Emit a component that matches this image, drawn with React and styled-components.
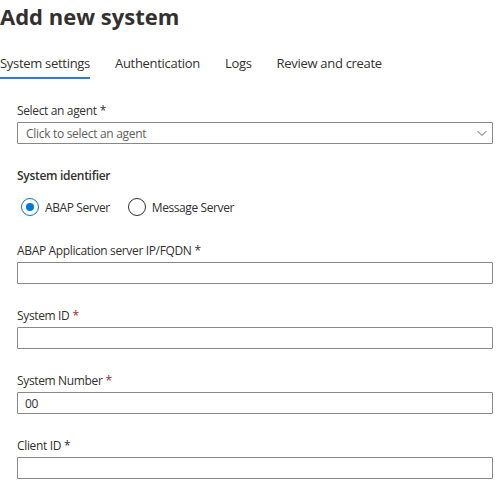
import React, { useState } from "react";
import styled, { createGlobalStyle } from "styled-components";

const GlobalStyle = createGlobalStyle`
    body {
        margin: 0;
        background: #ffffff;
        font-family: "Open Sans", "Noto Sans", sans-serif;
        color: #323130;
    }
`;

const Page = styled.div`
    width: 499px;
`;

const Title = styled.h1`
    margin: 0;
    font-size: 22px;
    line-height: 32px;
    font-weight: 700;
    color: #323130;
`;

const TabBar = styled.div`
    display: flex;
    gap: 25px;
    margin-top: 21px;
`;

const Tab = styled.div`
    font-size: 13px;
    letter-spacing: -0.3px;
    line-height: 21px;
    padding-bottom: 3px;
    color: #323130;
    border-bottom: 2px solid ${(p) => (p.active ? "#2b7cd3" : "transparent")};
`;

const Form = styled.div`
    padding: 21px 0 0 17px;
    width: 476px;
`;

const Field = styled.div`
    margin-bottom: 21px;
`;

const Label = styled.div`
    font-size: 12px;
    letter-spacing: -0.35px;
    line-height: 21px;
    margin-bottom: 1px;
    color: #323130;
`;

const Required = styled.span`
    color: ${(p) => (p.red ? "#a4262c" : "#323130")};
    margin-left: 3px;
`;

const Input = styled.input`
    box-sizing: border-box;
    display: block;
    width: 100%;
    height: 22px;
    margin: 0;
    padding: 0 7px;
    border: 1px solid #8a8886;
    border-radius: 1px;
    font-family: inherit;
    font-size: 12px;
    letter-spacing: -0.3px;
    color: #323130;
    outline: none;
`;

const Dropdown = styled.div`
    box-sizing: border-box;
    display: flex;
    align-items: center;
    justify-content: space-between;
    height: 22px;
    padding: 0 4px 0 8px;
    border: 1px solid #8a8886;
    border-radius: 1px;
    font-size: 12px;
    letter-spacing: -0.3px;
    color: #605e5c;
`;

const SectionTitle = styled.div`
    font-size: 12px;
    letter-spacing: -0.3px;
    line-height: 21px;
    font-weight: 600;
    margin-bottom: 11px;
`;

const RadioRow = styled.div`
    display: flex;
    align-items: center;
    height: 20px;
    padding-left: 4px;
    margin-bottom: 23px;
`;

const RadioOption = styled.label`
    display: flex;
    align-items: center;
    gap: 6px;
    font-size: 12px;
    letter-spacing: -0.4px;
    margin-right: 18px;
    cursor: pointer;
`;

const RadioCircle = styled.span`
    box-sizing: border-box;
    width: 18px;
    height: 18px;
    border-radius: 50%;
    border: 1px solid ${(p) => (p.checked ? "#0078d4" : "#323130")};
    display: flex;
    align-items: center;
    justify-content: center;

    &::after {
        content: "";
        width: 8px;
        height: 8px;
        border-radius: 50%;
        background: ${(p) => (p.checked ? "#0078d4" : "transparent")};
    }
`;

const tabs = ["System settings", "Authentication", "Logs", "Review and create"];

const fields = [
    { label: "ABAP Application server IP/FQDN", red: false, value: "" },
    { label: "System ID", red: true, value: "" },
    { label: "System Number", red: true, value: "00" },
    { label: "Client ID", red: false, value: "" },
];

function Chevron() {
    return (
        <svg width="12" height="12" viewBox="0 0 12 12">
            <path d="M1.5 4 L6 8.5 L10.5 4" fill="none" stroke="#605e5c" strokeWidth="1" />
        </svg>
    );
}

function App() {
    const [server, setServer] = useState("abap");

    return (
        <Page>
            <GlobalStyle />
            <Title>Add new system</Title>
            <TabBar>
                {tabs.map((t, i) => (
                    <Tab key={t} active={i === 0}>
                        {t}
                    </Tab>
                ))}
            </TabBar>
            <Form>
                <Field>
                    <Label>
                        Select an agent<Required>*</Required>
                    </Label>
                    <Dropdown>
                        <span>Click to select an agent</span>
                        <Chevron />
                    </Dropdown>
                </Field>
                <SectionTitle>System identifier</SectionTitle>
                <RadioRow>
                    <RadioOption onClick={() => setServer("abap")}>
                        <RadioCircle checked={server === "abap"} />
                        ABAP Server
                    </RadioOption>
                    <RadioOption onClick={() => setServer("message")}>
                        <RadioCircle checked={server === "message"} />
                        Message Server
                    </RadioOption>
                </RadioRow>
                {fields.map((f) => (
                    <Field key={f.label}>
                        <Label>
                            {f.label}
                            <Required red={f.red}>*</Required>
                        </Label>
                        <Input defaultValue={f.value} />
                    </Field>
                ))}
            </Form>
        </Page>
    );
}

export default App;
